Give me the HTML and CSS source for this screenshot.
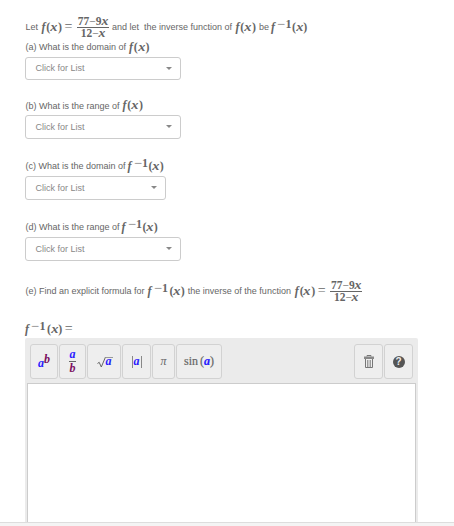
FILE: index.html
```html
<!DOCTYPE html>
<html lang="en">
<head>
    <meta charset="UTF-8">
    <meta name="viewport" content="width=device-width, initial-scale=1.0">
    <title>Inverse Functions</title>
    <link rel="stylesheet" href="styles.css">
</head>
<body>
    <div class="question">
        <div class="line intro">
            <span class="words let">Let</span>
            <span class="math fx"><i>f</i>(<i class="x">x</i>)</span>
            <span class="math equals">=</span>
            <span class="math fraction"><span class="top">77<b class="minus">−</b>9<i class="x">x</i></span><span>12<b class="minus">−</b><i class="x">x</i></span></span>
            <span class="words and">and let&nbsp; the inverse function of</span>
            <span class="math fx"><i>f</i>(<i class="x">x</i>)</span>
            <span class="words be">be</span>
            <span class="math inverse"><i>f</i><sup><b class="minus">−</b>1</sup><span>(<i class="x">x</i>)</span></span>
        </div>
        <div class="line part-a">
            <span class="words">(a) What is the domain of</span>
            <span class="math fx"><i>f</i>(<i class="x">x</i>)</span>
        </div>
        <div class="select first">Click for List</div>
        <div class="line part">
            <span class="words">(b) What is the range of</span>
            <span class="math fx"><i>f</i>(<i class="x">x</i>)</span>
        </div>
        <div class="select">Click for List</div>
        <div class="line part inv">
            <span class="words">(c) What is the domain of</span>
            <span class="math inverse"><i>f</i><sup><b class="minus">−</b>1</sup><span>(<i class="x">x</i>)</span></span>
        </div>
        <div class="select short">Click for List</div>
        <div class="line part inv">
            <span class="words">(d) What is the range of</span>
            <span class="math inverse"><i>f</i><sup><b class="minus">−</b>1</sup><span>(<i class="x">x</i>)</span></span>
        </div>
        <div class="select">Click for List</div>
        <div class="line part-e">
            <span class="words find">(e) Find an explicit formula for</span>
            <span class="math inverse wide"><i>f</i><sup><b class="minus">−</b>1</sup><span>(<i class="x">x</i>)</span></span>
            <span class="words tight">the inverse of the function</span>
            <span class="math fx"><i>f</i>(<i class="x">x</i>)</span>
            <span class="math equals">=</span>
            <span class="math fraction"><span class="top">77<b class="minus">−</b>9<i class="x">x</i></span><span>12<b class="minus">−</b><i class="x">x</i></span></span>
        </div>
        <div class="line answer">
            <span class="math inverse wide"><i>f</i><sup><b class="minus">−</b>1</sup><span>(<i class="x">x</i>)</span></span>
            <span class="math equals">=</span>
        </div>
    </div>
    <div class="editor">
        <div class="toolbar">
            <button class="tool power"><i class="blue">a</i><sup class="plum"><i>b</i></sup></button>
            <button class="tool over"><i class="blue numer">a</i><i class="plum">b</i></button>
            <button class="tool root">
                <svg width="16" height="12" viewBox="0 0 16 12"><path d="M0.5 7.5L2.2 6.3L4.3 11L8.5 1" fill="none" stroke="#666" stroke-width="1"/><path d="M8.5 1.5H16" stroke="#999" stroke-width="1"/></svg><i class="blue">a</i>
            </button>
            <button class="tool abs"><span class="bar"></span><i class="blue">a</i><span class="bar"></span></button>
            <button class="tool pi"><i>π</i></button>
            <button class="tool sin">sin<span class="paren">(</span><i class="blue">a</i>)</button>
            <button class="tool trash">
                <svg width="12" height="14" viewBox="0 0 12 14"><path d="M4 1.5V0.5H8V1.5" fill="none" stroke="#777"/><path d="M1 1.5H11V4H1Z" fill="#888"/><path d="M2.5 4V12.5H9.5V4M4.8 5V12M7.2 5V12" fill="none" stroke="#777"/></svg>
            </button>
            <button class="tool help"><span class="badge">?</span></button>
        </div>
        <div class="field"></div>
    </div>
    <div class="footer"></div>
</body>
</html>
```
FILE: styles.css
```css
body {
    margin: 0;
    height: 526px;
    overflow: hidden;
    background: white;
    color: #666;
    font-family: "Liberation Sans", Arial, sans-serif;
    font-size: 9px;
    display: flex;
    flex-direction: column;
}
.question {
    padding: 14px 0 0 25px;
}
.line {
    display: flex;
    align-items: center;
    white-space: nowrap;
    height: 16px;
}
.line.intro {
    height: 26px;
}
.line.part-a {
    height: 14px;
}
.line.part {
    margin-top: 16px;
    height: 19px;
}
.line.part.inv {
    margin-top: 17px;
    height: 20px;
}
.line.part-e {
    margin-top: 17px;
    height: 26px;
}
.line.answer {
    margin-top: 16px;
    height: 18px;
}
.words {
    margin-right: 2px;
    padding-left: 0.5px;
}
.let {
    width: 13px;
}
.and {
    width: 120.5px;
}
.be {
    width: 10px;
}
.find {
    width: 120px;
}
.tight {
    width: 104px;
}
.math,
.tool {
    font-family: "Liberation Serif", "Times New Roman", serif;
    font-weight: bold;
}
.math {
    font-size: 12px;
    line-height: 14px;
}
.x {
    display: inline-block;
    transform: scaleX(1.2);
}
.fx {
    letter-spacing: 0.8px;
    width: 21px;
    margin: -1px 2px 0 1px;
}
.minus {
    font-weight: normal;
}
.equals {
    font-weight: normal;
    font-size: 14px;
    width: 9px;
    margin-right: 3px;
}
.fraction {
    display: flex;
    flex-direction: column;
    align-items: center;
    font-size: 11.5px;
    line-height: 11px;
    width: 32px;
    margin-right: 3px;
}
.fraction .top {
    width: 32px;
    display: flex;
    justify-content: center;
    border-bottom: 1px solid #666;
}
.inverse {
    display: flex;
    letter-spacing: 0.6px;
    margin-right: 2px;
    margin-top: -1px;
}
.inverse > i {
    width: 7px;
}
.inverse sup {
    display: flex;
    font-size: 12px;
    line-height: 12px;
    margin-top: -2px;
    width: 14px;
}
.inverse sup .minus {
    transform: scaleX(1.2);
}
.inverse.wide > span {
    margin-left: 1px;
}
.select {
    box-sizing: border-box;
    width: 156px;
    height: 24px;
    padding: 0 8px 1px 9.5px;
    border: 1px solid #ccc;
    border-radius: 3px;
    color: #888;
    display: flex;
    align-items: center;
    justify-content: space-between;
}
.select::after {
    content: "";
    border: 3px solid transparent;
    border-top-color: #888;
    border-bottom: 0;
}
.select.first {
    height: 23px;
    margin-top: 3px;
}
.select.short {
    width: 141px;
}
.editor {
    box-sizing: border-box;
    width: 393px;
    height: 184px;
    margin-left: 25px;
    background: #ebebeb;
    border-radius: 2px 2px 0 0;
    display: flex;
    flex-direction: column;
}
.toolbar {
    display: flex;
    gap: 1px;
    padding: 6px 5px 4px 5px;
}
.tool {
    box-sizing: border-box;
    height: 35px;
    padding: 0;
    border: 1px solid #d2d2d2;
    border-radius: 3px;
    background: #eee;
    color: #666;
    font-size: 12px;
    display: flex;
    align-items: center;
    justify-content: center;
}
.blue {
    color: #2a1cff;
}
.plum {
    color: #7b1060;
}
.power {
    width: 28px;
}
.power .blue {
    padding-top: 3px;
}
.power sup {
    margin-top: -5px;
    line-height: 12px;
    font-size: 12px;
}
.over {
    width: 27px;
    flex-direction: column;
    line-height: 13px;
}
.over .numer {
    width: 7px;
    border-bottom: 1px solid #666;
}
.root {
    width: 34px;
}
.root .blue {
    margin-left: -7px;
}
.abs {
    width: 29px;
    gap: 1px;
}
.bar {
    width: 1px;
    height: 12px;
    background: #888;
}
.pi {
    width: 23px;
    font-weight: normal;
}
.sin {
    width: 46px;
    font-weight: normal;
    -webkit-text-stroke: 0.2px;
}
.sin .blue {
    font-weight: bold;
}
.paren {
    margin-left: 2px;
}
.trash {
    width: 29px;
    margin-left: auto;
}
.help {
    width: 29px;
}
.badge {
    width: 12px;
    height: 12px;
    border-radius: 50%;
    background: #555;
    color: #eee;
    font: bold 10px/12px "Liberation Sans", Arial, sans-serif;
}
.field {
    flex: 1;
    margin: 0 2px;
    background: white;
    border: 1px solid #ccc;
    border-bottom: 0;
}
.footer {
    flex: 1;
    border-top: 1px solid #ddd;
    background: #f4f4f4;
}
```
